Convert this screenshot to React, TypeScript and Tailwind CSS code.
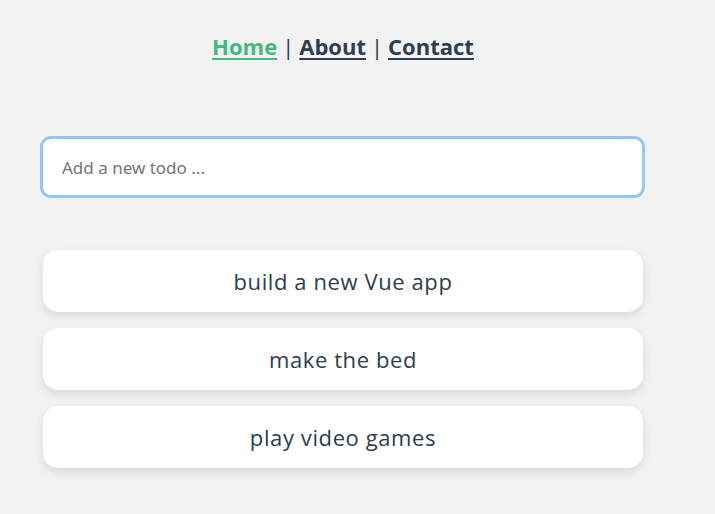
import { useState } from "react";

const TODOS = ["build a new Vue app", "make the bed", "play video games"];

export default function App() {
  const [todo, setTodo] = useState("");

  return (
    <div className="min-h-[514px] w-full bg-[#f2f2f2] text-[#2c3e50] [font-family:'Open_Sans',Lato,sans-serif]">
      <div className="w-[686px] px-[43px]">
        {/* nav */}
        <nav className="flex justify-center pt-[30px] text-[22px] leading-[32px]">
          <a href="#" className="font-bold text-[#42b983] underline underline-offset-[3px] decoration-2">
            Home
          </a>
          <span className="px-[5px]">|</span>
          <a href="#" className="font-bold underline underline-offset-[3px] decoration-2">
            About
          </a>
          <span className="px-[5px]">|</span>
          <a href="#" className="font-bold underline underline-offset-[3px] decoration-2">
            Contact
          </a>
        </nav>

        {/* new todo */}
        <div className="mt-[77px]">
          <input
            value={todo}
            onChange={(e) => setTodo(e.target.value)}
            placeholder="Add a new todo ..."
            className="h-[56px] w-[599px] rounded-lg bg-white px-[19px] text-[17px] text-[#2c3e50] outline-[3px] outline-solid outline-[#99c5f2] placeholder:text-[#757575] [font-family:'Noto_Sans',sans-serif]"
          />
        </div>

        {/* list */}
        <ul className="mt-[55px] flex flex-col gap-4">
          {TODOS.map((t) => (
            <li
              key={t}
              className="flex h-[62px] w-[600px] items-center justify-center rounded-[15px] bg-white text-[22px] tracking-[0.6px] shadow-[0_4px_10px_rgba(0,0,0,0.1)]"
            >
              {t}
            </li>
          ))}
        </ul>
      </div>
    </div>
  );
}
